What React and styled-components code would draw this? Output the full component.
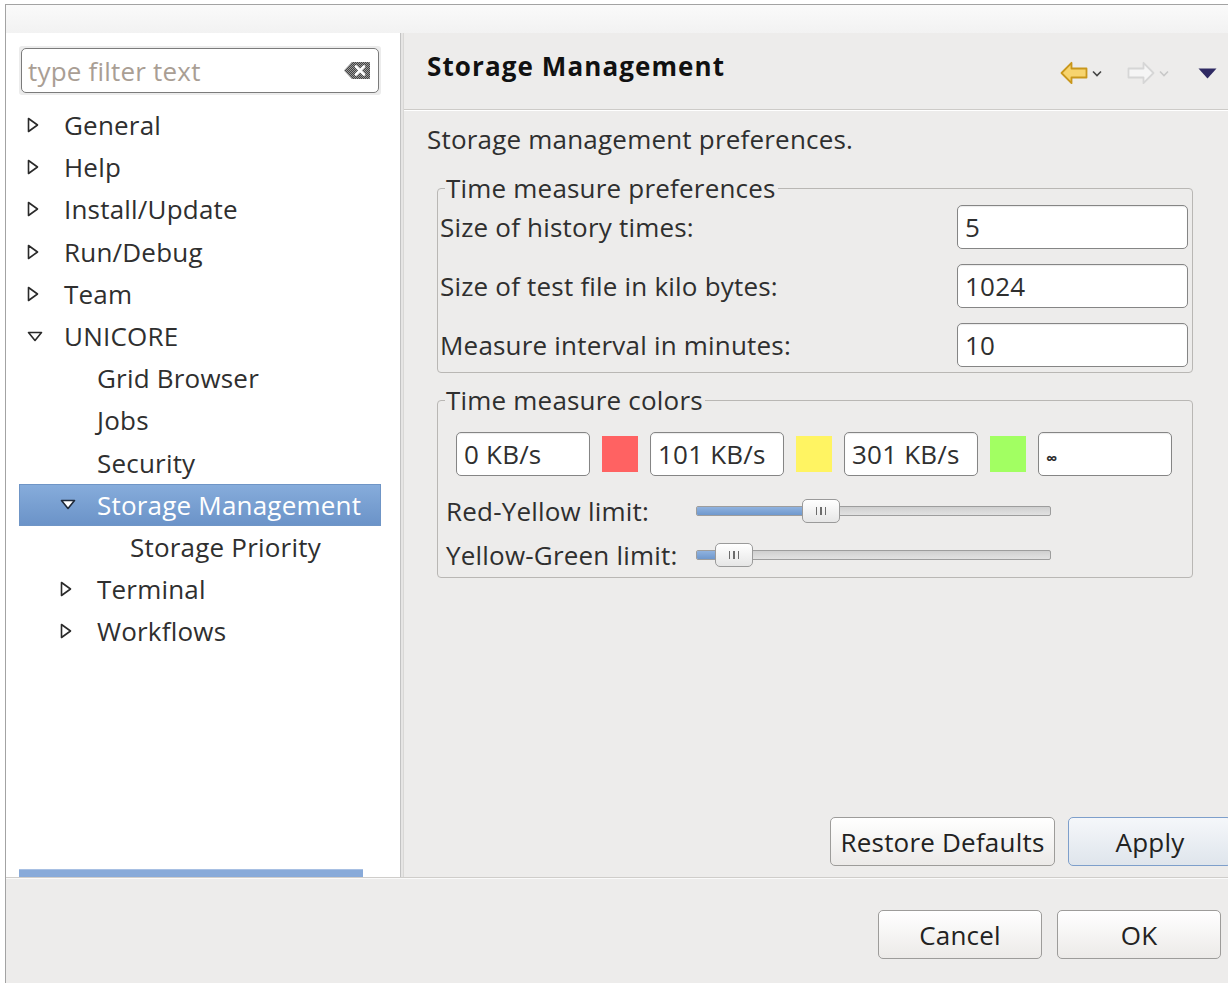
import React from 'react'
import styled, { createGlobalStyle } from 'styled-components'

const GlobalStyle = createGlobalStyle`
  body {
    margin: 0;
    background: #ffffff;
    overflow: hidden;
    font-family: "Open Sans", "DejaVu Sans", sans-serif;
    letter-spacing: 0.2px;
    color: #2f2f2f;
  }
`

const tree = [
  { label: 'General', level: 0, arrow: 'right' },
  { label: 'Help', level: 0, arrow: 'right' },
  { label: 'Install/Update', level: 0, arrow: 'right' },
  { label: 'Run/Debug', level: 0, arrow: 'right' },
  { label: 'Team', level: 0, arrow: 'right' },
  { label: 'UNICORE', level: 0, arrow: 'down' },
  { label: 'Grid Browser', level: 1 },
  { label: 'Jobs', level: 1 },
  { label: 'Security', level: 1 },
  { label: 'Storage Management', level: 1, arrow: 'down', selected: true },
  { label: 'Storage Priority', level: 2 },
  { label: 'Terminal', level: 1, arrow: 'right' },
  { label: 'Workflows', level: 1, arrow: 'right' },
]

const timeFields = [
  { label: 'Size of history times:', value: '5' },
  { label: 'Size of test file in kilo bytes:', value: '1024' },
  { label: 'Measure interval in minutes:', value: '10' },
]

const limits = [
  { label: 'Red-Yellow limit:', pos: 105 },
  { label: 'Yellow-Green limit:', pos: 18 },
]

function Expander({ dir, selected }) {
  const stroke = selected ? '#1f2a3a' : '#2a2a2a'
  if (dir === 'down') {
    return (
      <svg width="16" height="11" viewBox="0 0 16 11">
        <path d="M1.5 1.5 L14.5 1.5 L8 9.5 Z" fill="#fff" stroke={stroke} strokeWidth="1.6" strokeLinejoin="round" />
      </svg>
    )
  }
  return (
    <svg width="12" height="16" viewBox="0 0 12 16">
      <path d="M1.5 1.5 L10.5 8 L1.5 14.5 Z" fill="#fff" stroke={stroke} strokeWidth="1.6" strokeLinejoin="round" />
    </svg>
  )
}

function ClearIcon() {
  return (
    <svg width="28" height="21" viewBox="0 0 28 21">
      <defs>
        <pattern id="dots" width="2" height="2" patternUnits="userSpaceOnUse">
          <rect width="2" height="2" fill="#9a9a9a" />
          <rect width="1" height="1" fill="#444" />
          <rect x="1" y="1" width="1" height="1" fill="#444" />
        </pattern>
      </defs>
      <path d="M1 10.5 L9 2 L26 2 Q27 2 27 3 L27 18 Q27 19 26 19 L9 19 Z" fill="url(#dots)" />
      <path d="M13 6.5 L21 14.5 M21 6.5 L13 14.5" stroke="#fff" strokeWidth="2.6" strokeLinecap="round" />
    </svg>
  )
}

function NavArrow({ back }) {
  const fill = back ? '#f7d46e' : '#f5f5f5'
  const stroke = back ? '#c9971c' : '#d6d6d6'
  return (
    <svg width="28" height="24" viewBox="0 0 28 24" style={back ? undefined : { transform: 'scaleX(-1)' }}>
      <path
        d="M1.5 12 L11.5 1.8 L11.5 7.5 L26.5 7.5 L26.5 16.5 L11.5 16.5 L11.5 22.2 Z"
        fill={fill}
        stroke={stroke}
        strokeWidth="1.8"
        strokeLinejoin="round"
      />
    </svg>
  )
}

function Chevron({ faint }) {
  return (
    <svg width="10" height="7" viewBox="0 0 10 7">
      <path d="M1 1.5 L5 5.5 L9 1.5" fill="none" stroke={faint ? '#c8c8c8' : '#444'} strokeWidth="1.6" />
    </svg>
  )
}

function MenuTriangle() {
  return (
    <svg width="19" height="11" viewBox="0 0 19 11">
      <path d="M0.5 0.5 L18.5 0.5 L9.5 10.5 Z" fill="#2f2a63" />
    </svg>
  )
}

export default function App() {
  return (
    <>
      <GlobalStyle />
      <Frame>
        <TitleStrip />
        <Main>
          <LeftPanel>
            <FilterWrap>
              <FilterBox>
                <Placeholder>type filter text</Placeholder>
                <ClearIcon />
              </FilterBox>
            </FilterWrap>
            <Tree>
              {tree.map((item) => (
                <TreeRow key={item.label} $level={item.level} $selected={item.selected}>
                  <ArrowSlot>{item.arrow && <Expander dir={item.arrow} selected={item.selected} />}</ArrowSlot>
                  {item.label}
                </TreeRow>
              ))}
            </Tree>
            <ScrollThumb />
          </LeftPanel>
          <Sash />
          <RightPanel>
            <PageHeader>
              <PageTitle>Storage Management</PageTitle>
              <NavTools>
                <NavArrow back />
                <Chevron />
                <NavGap $w={17} />
                <NavArrow />
                <Chevron faint />
                <NavGap $w={21} />
                <MenuTriangle />
              </NavTools>
            </PageHeader>
            <PageBody>
              <Description>Storage management preferences.</Description>
              <Group>
                <Legend>Time measure preferences</Legend>
                <FieldGrid>
                  {timeFields.map((f) => (
                    <React.Fragment key={f.label}>
                      <FieldLabel>{f.label}</FieldLabel>
                      <TextField>{f.value}</TextField>
                    </React.Fragment>
                  ))}
                </FieldGrid>
              </Group>
              <ColorGroup>
                <Legend>Time measure colors</Legend>
                <ColorRow>
                  <SpeedField>0 KB/s</SpeedField>
                  <Swatch $color="#ff6262" />
                  <SpeedField>101 KB/s</SpeedField>
                  <Swatch $color="#fff462" />
                  <SpeedField>301 KB/s</SpeedField>
                  <Swatch $color="#a2ff62" />
                  <SpeedField>
                    <Infinity>∞</Infinity>
                  </SpeedField>
                </ColorRow>
                <Sliders>
                  {limits.map((l) => (
                    <SliderRow key={l.label}>
                      <SliderLabel>{l.label}</SliderLabel>
                      <Track>
                        <Fill style={{ width: l.pos + 5 }} />
                        <Thumb style={{ left: l.pos }}>
                          <Grip />
                        </Thumb>
                      </Track>
                    </SliderRow>
                  ))}
                </Sliders>
              </ColorGroup>
            </PageBody>
            <PageButtons>
              <Button $width={225}>Restore Defaults</Button>
              <Button $width={164} $primary>Apply</Button>
            </PageButtons>
          </RightPanel>
        </Main>
        <DialogButtons>
          <Button $width={164}>Cancel</Button>
          <Button $width={164}>OK</Button>
        </DialogButtons>
      </Frame>
    </>
  )
}

const Frame = styled.div`
  margin: 4px 0 0 5px;
  width: 1234px;
  height: 990px;
  border-top: 1px solid #a3a3a3;
  border-left: 1px solid #a3a3a3;
  background: #edeceb;
  display: flex;
  flex-direction: column;
`

const TitleStrip = styled.div`
  height: 28px;
  background: linear-gradient(#fafafa, #f2f2f2);
`

const Main = styled.div`
  height: 844px;
  display: flex;
  border-bottom: 1px solid #cfcdca;
`

const LeftPanel = styled.div`
  width: 394px;
  background: #ffffff;
  display: flex;
  flex-direction: column;
`

const Sash = styled.div`
  width: 2px;
  border-left: 1px solid #c2c2c2;
  background: #e6e5e4;
`

const FilterWrap = styled.div`
  margin: 13px 0 0 13px;
  width: 358px;
  padding: 2px;
  background: #ececec;
  border-radius: 3px;
`

const FilterBox = styled.div`
  height: 43px;
  border: 1px solid #7b7b7b;
  border-radius: 5px;
  background: #ffffff;
  display: flex;
  align-items: center;
  justify-content: space-between;
  padding: 0 7px 0 6px;
`

const Placeholder = styled.span`
  font-size: 26px;
  color: #a99e94;
`

const Tree = styled.div`
  margin-top: 9px;
  flex: 1;
`

const TreeRow = styled.div`
  margin-left: 13px;
  width: 362px;
  height: 42.2px;
  box-sizing: border-box;
  padding-left: ${(p) => p.$level * 33}px;
  display: flex;
  align-items: center;
  font-size: 26px;
  white-space: nowrap;
  color: ${(p) => (p.$selected ? '#ffffff' : '#2f2f2f')};
  background: ${(p) => (p.$selected ? 'linear-gradient(#86acdb, #6b93c8)' : 'transparent')};
  border: 1px solid ${(p) => (p.$selected ? '#6f95c6' : 'transparent')};
`

const ArrowSlot = styled.span`
  width: 44px;
  flex-shrink: 0;
  display: flex;
  align-items: center;
  padding-left: 7px;
  box-sizing: border-box;
  svg {
    display: block;
  }
`

const ScrollThumb = styled.div`
  margin-left: 13px;
  width: 344px;
  height: 7px;
  background: #88aad9;
  border-top: 1px solid #a8c0e3;
`

const RightPanel = styled.div`
  flex: 1;
  display: flex;
  flex-direction: column;
  border-left: 1px solid #d9d8d6;
`

const PageHeader = styled.div`
  height: 76px;
  display: flex;
  justify-content: space-between;
  align-items: flex-start;
  padding: 0 23px 0 23px;
  border-bottom: 1px solid #cdcbc8;
  box-shadow: 0 1px 0 #ffffff;
`

const PageTitle = styled.div`
  margin-top: 16px;
  font-size: 26px;
  font-weight: 700;
  line-height: 34px;
  letter-spacing: 1.1px;
  color: #111;
`

const NavTools = styled.div`
  margin-top: 28px;
  display: flex;
  align-items: center;
  gap: 4px;
  svg {
    display: block;
  }
`

const NavGap = styled.span`
  width: ${(p) => p.$w}px;
`

const PageBody = styled.div`
  padding: 14px 0 0 23px;
`

const Description = styled.div`
  font-size: 26px;
  line-height: 30px;
`

const Group = styled.fieldset`
  margin: 19px 0 0 10px;
  width: 756px;
  box-sizing: border-box;
  padding: 0 4px 5px 2px;
  border: 1px solid #b9b7b4;
  border-radius: 4px;
`

const ColorGroup = styled(Group)`
  margin-top: 12px;
  padding-bottom: 0;
`

const Legend = styled.legend`
  font-size: 26px;
  line-height: 30px;
  padding: 0 2px 0 1px;
  margin-left: 5px;
`

const FieldGrid = styled.div`
  margin-top: 2px;
  display: grid;
  grid-template-columns: 1fr 231px;
  row-gap: 15px;
  align-items: center;
`

const FieldLabel = styled.div`
  font-size: 26px;
`

const TextField = styled.div`
  height: 44px;
  box-sizing: border-box;
  border: 1px solid #858585;
  border-radius: 5px;
  background: #ffffff;
  font-size: 26px;
  line-height: 42px;
  padding-left: 7px;
  box-shadow: inset 0 1px 1px rgba(0, 0, 0, 0.08);
`

const ColorRow = styled.div`
  margin: 17px 0 0 16px;
  display: flex;
  align-items: center;
  gap: 12px;
`

const SpeedField = styled(TextField)`
  width: 134px;
`

const Infinity = styled.span`
  font-size: 16px;
  font-weight: 700;
`

const Swatch = styled.div`
  width: 36px;
  height: 36px;
  background: ${(p) => p.$color};
`

const Sliders = styled.div`
  margin-top: 13px;
  padding-left: 6px;
`

const SliderRow = styled.div`
  display: flex;
  align-items: center;
  height: 44px;
`

const SliderLabel = styled.div`
  width: 250px;
  font-size: 26px;
`

const Track = styled.div`
  position: relative;
  width: 355px;
  height: 10px;
  box-sizing: border-box;
  border: 1px solid #9d9d9d;
  border-radius: 2px;
  background: linear-gradient(#cfcfcf, #e2e2e2);
`

const Fill = styled.div`
  height: 100%;
  background: linear-gradient(#8fb2df, #6f98cd);
  border-radius: 1px;
`

const Thumb = styled.div`
  position: absolute;
  top: -8px;
  width: 38px;
  height: 24px;
  box-sizing: border-box;
  border: 1px solid #9a9a9a;
  border-radius: 5px;
  background: linear-gradient(#ffffff, #e6e6e6);
  display: flex;
  align-items: center;
  justify-content: center;
`

const Grip = styled.div`
  width: 11px;
  height: 8px;
  background: repeating-linear-gradient(90deg, #6c6c6c 0 1.5px, transparent 1.5px 4.5px);
`

const PageButtons = styled.div`
  margin-top: auto;
  display: flex;
  justify-content: flex-end;
  gap: 13px;
  padding: 0 8px 11px 0;
`

const DialogButtons = styled.div`
  display: flex;
  justify-content: flex-end;
  gap: 15px;
  padding: 31px 19px 0 0;
  border-top: 1px solid #fafafa;
`

const Button = styled.div`
  width: ${(p) => p.$width}px;
  height: 49px;
  box-sizing: border-box;
  border: 1px solid ${(p) => (p.$primary ? '#7e9fcb' : '#9d9c9a')};
  border-radius: 5px;
  background: ${(p) => (p.$primary ? 'linear-gradient(#f5f7fa, #dfe5ec)' : 'linear-gradient(#ffffff, #eceae8)')};
  font-size: 26px;
  display: flex;
  align-items: center;
  justify-content: center;
  color: #222;
`
